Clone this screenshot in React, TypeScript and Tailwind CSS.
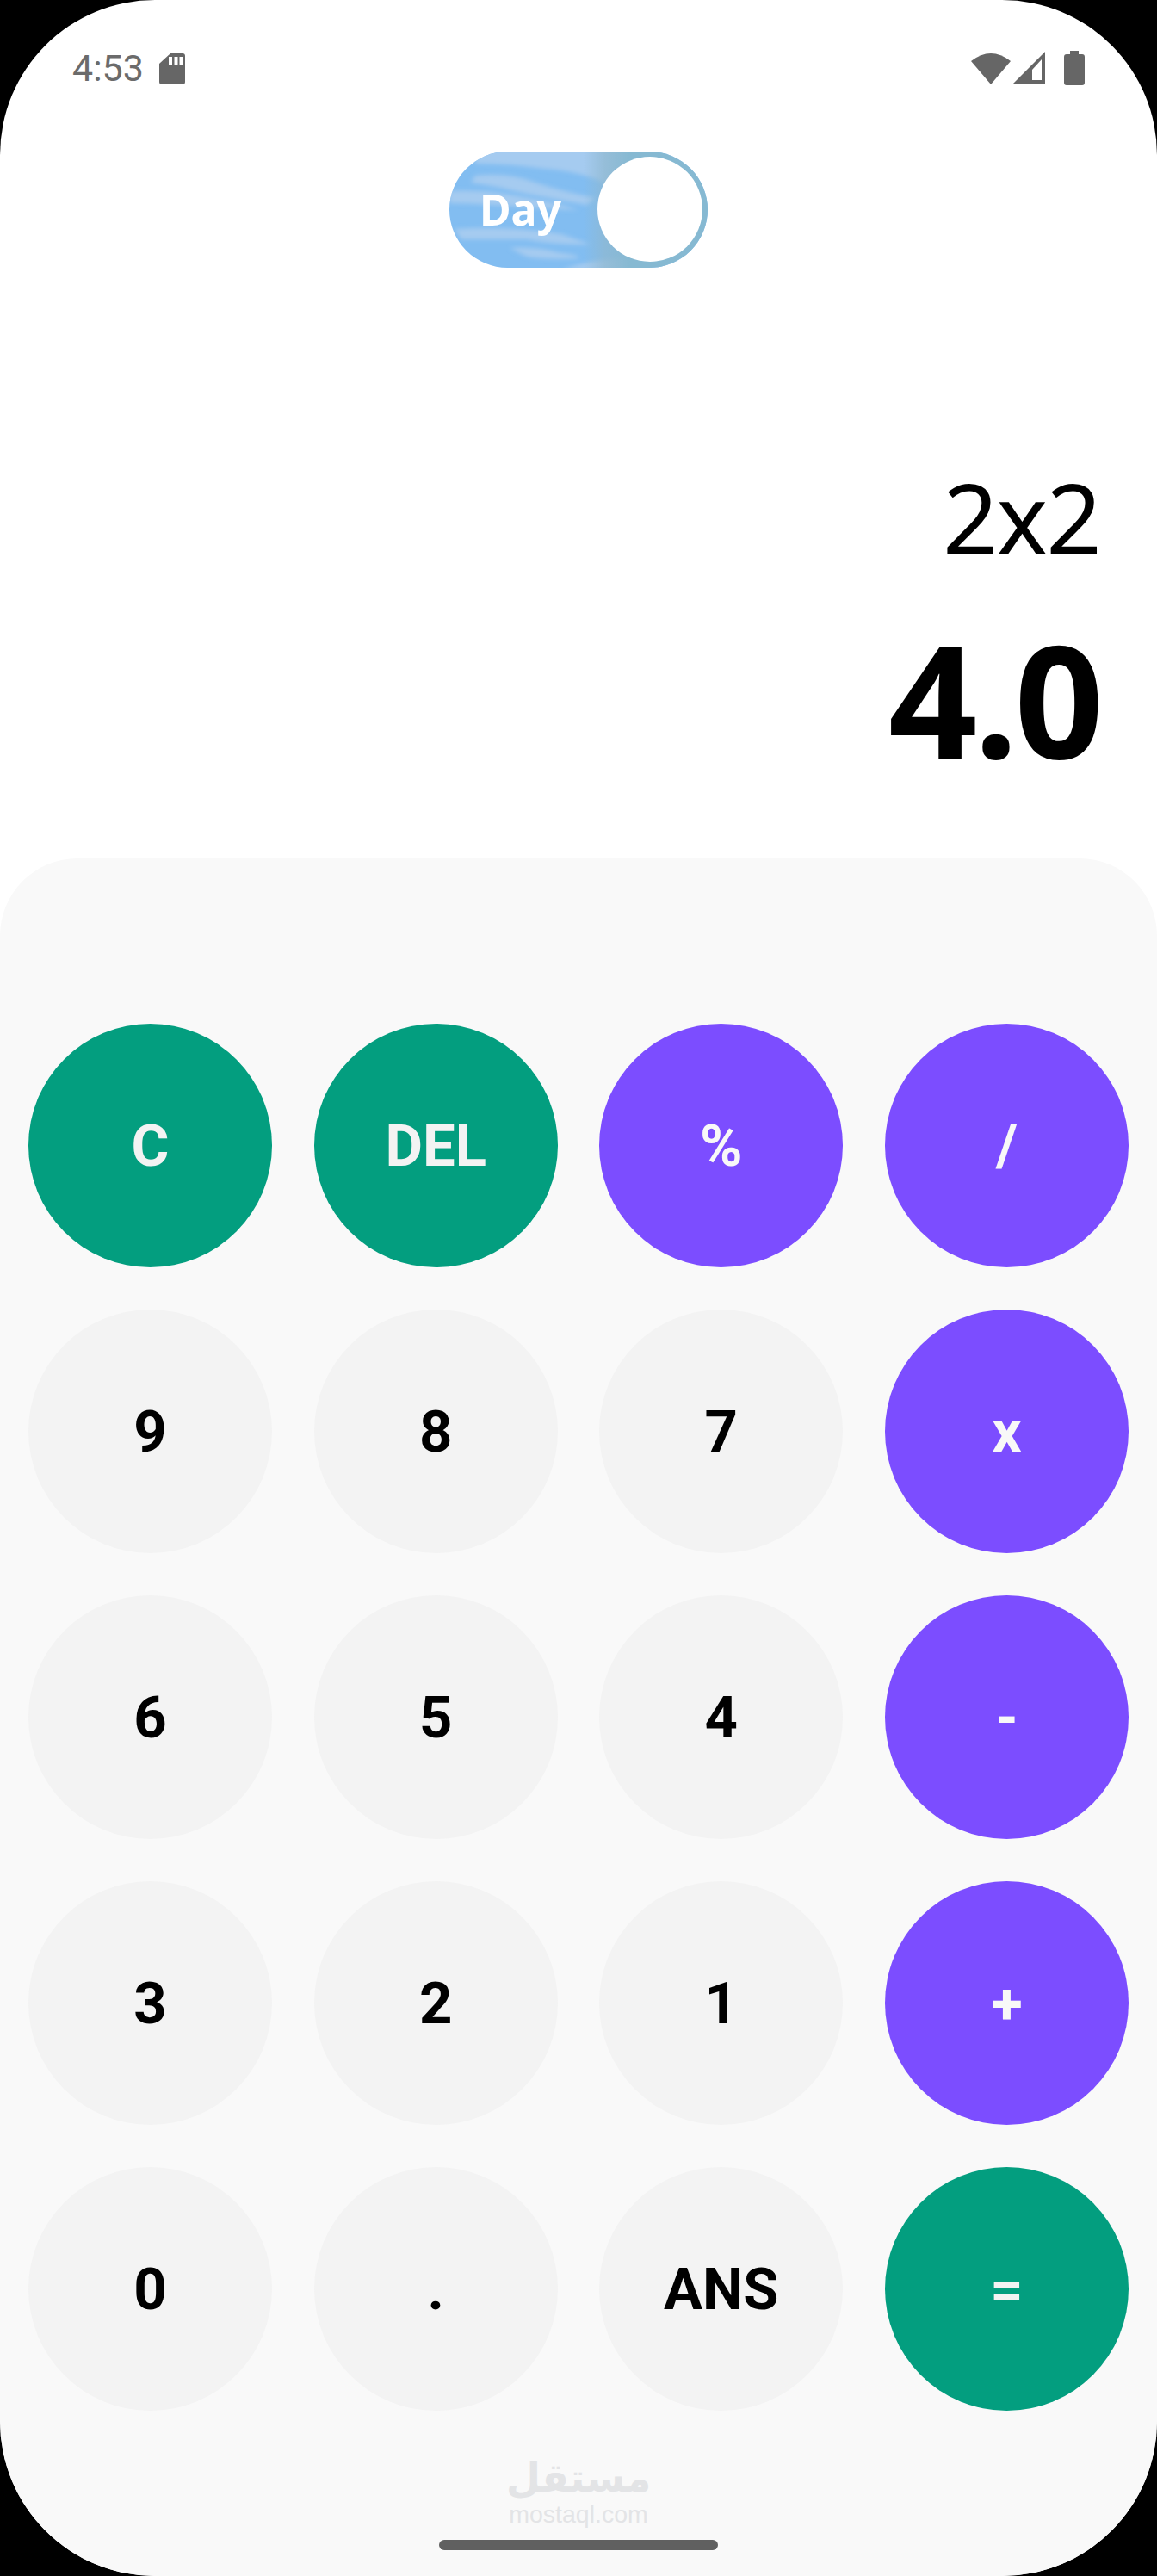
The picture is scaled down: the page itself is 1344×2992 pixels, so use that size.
import React from "react";

const roboto = "font-['Roboto',sans-serif]";

type K = { t: string; c: "g" | "p" | "n" };
const keys: K[] = [
  { t: "C", c: "g" }, { t: "DEL", c: "g" }, { t: "%", c: "p" }, { t: "/", c: "p" },
  { t: "9", c: "n" }, { t: "8", c: "n" }, { t: "7", c: "n" }, { t: "x", c: "p" },
  { t: "6", c: "n" }, { t: "5", c: "n" }, { t: "4", c: "n" }, { t: "-", c: "p" },
  { t: "3", c: "n" }, { t: "2", c: "n" }, { t: "1", c: "n" }, { t: "+", c: "p" },
  { t: "0", c: "n" }, { t: ".", c: "n" }, { t: "ANS", c: "n" }, { t: "=", c: "g" },
];

function Key({ k }: { k: K }) {
  const colour =
    k.c === "g"
      ? "bg-[#039e7f] text-[#f3f3f3]"
      : k.c === "p"
        ? "bg-[#7c4dff] text-[#f8f8f8]"
        : "bg-[#f3f3f3] text-black";
  return (
    <div className={`w-[283px] h-[283px] rounded-full flex items-center justify-center font-bold text-[67px] leading-[80px] ${roboto} ${colour}`}>
      {k.t}
    </div>
  );
}

function Toggle() {
  return (
    <div className="relative w-[300px] h-[135px] rounded-full overflow-hidden bg-[#82bdf1]">
      <svg className="absolute inset-0" width="300" height="135" viewBox="0 0 300 135">
        <defs>
          <linearGradient id="rim" x1="0" x2="1" y1="0" y2="0">
            <stop offset="0.52" stopColor="#8fb8cf" stopOpacity="0" />
            <stop offset="0.6" stopColor="#8fb8cf" stopOpacity="0.7" />
            <stop offset="0.7" stopColor="#86b9d2" />
            <stop offset="1" stopColor="#86b9d2" />
          </linearGradient>
          <filter id="soft" x="-10%" y="-10%" width="120%" height="120%">
            <feGaussianBlur stdDeviation="2.5" />
          </filter>
        </defs>
        <g filter="url(#soft)" fill="#a5cbf0">
          <path d="M30 -4H240V36L190 40Q150 22 110 20Q70 14 30 14Z" />
          <path d="M30 28Q70 24 100 36Q130 46 170 54L160 62Q90 50 60 42Q40 38 25 36Z" />
          <path d="M0 46Q40 44 80 52Q120 58 150 68Q100 66 50 62Q20 60 0 60Z" />
          <path d="M6 90Q70 86 130 96L165 108Q120 108 90 102Q50 102 14 102Z" />
          <path d="M70 112Q100 110 130 118Q150 120 150 124Q110 126 90 122Z" />
          <path d="M130 138Q170 122 230 124L250 138Z" />
        </g>
        <rect width="300" height="135" fill="url(#rim)" />
      </svg>
      <span className="absolute left-[35px] top-[33px] text-[50px] leading-[68px] font-bold text-white font-['Noto_Sans',sans-serif]">
        Day
      </span>
      <div className="absolute left-[172px] top-[6px] w-[122px] h-[122px] rounded-full bg-white" />
    </div>
  );
}

export default function App() {
  return (
    <div className="w-[1344px] h-[2992px] bg-black overflow-hidden">
      <div className="w-full h-full rounded-[180px] overflow-hidden bg-white flex flex-col">
        <div className="h-[176px] shrink-0 flex items-start justify-between pl-[84px] pr-[84px] pt-[53px]">
          <div className="flex items-start gap-[18px] h-[52px]">
            <span className={`text-[43px] leading-[52px] text-[#6b6b6b] ${roboto}`}>4:53</span>
            <svg className="mt-[8px]" width="30" height="38" viewBox="0 0 30 38">
              <path
                d="M13 1H27a3 3 0 0 1 3 3V34a3 3 0 0 1-3 3H3a3 3 0 0 1-3-3V13Z"
                fill="#666"
              />
              <rect x="11" y="5" width="4" height="9" fill="#fff" />
              <rect x="17.5" y="5" width="4" height="9" fill="#fff" />
              <rect x="23.5" y="5" width="4" height="9" fill="#fff" />
            </svg>
          </div>
          <div className="flex items-center h-[46px] mt-[3px]">
            <svg width="46" height="38" viewBox="0 0 46 38">
              <path d="M0 11 Q23 -7 46 11 L23 38Z" fill="#666" />
            </svg>
            <svg className="ml-[3px]" width="38" height="38" viewBox="0 0 38 38">
              <path d="M37 0V37H0Z" fill="#666" />
              <path d="M22 21 L33 9V33H22Z" fill="#fff" />
            </svg>
            <svg className="ml-[21px]" width="24" height="40" viewBox="0 0 24 40">
              <path
                d="M7 0H17V4H21a3 3 0 0 1 3 3V37a3 3 0 0 1-3 3H3a3 3 0 0 1-3-3V7a3 3 0 0 1 3-3H7Z"
                fill="#666"
              />
            </svg>
          </div>
        </div>

        <div className="flex justify-center shrink-0">
          <Toggle />
        </div>

        <div className="h-[686px] shrink-0 flex flex-col items-end pr-[66px] pt-[212px] font-['Noto_Sans',sans-serif] text-black">
          <div className="text-[113px] leading-[154px] tracking-[-2px]">2x2</div>
          <div className="text-[181px] leading-[246px] font-bold mt-[11px] tracking-[-4px]">4.0</div>
        </div>

        <div className="flex-1 bg-[#f9f9f9] rounded-t-[90px] pt-[192px] px-[33px] flex flex-col items-center">
          <div className="grid grid-cols-[repeat(4,283px)] auto-rows-[283px] gap-x-[48.67px] gap-y-[49px]">
            {keys.map((k) => (
              <Key key={k.t} k={k} />
            ))}
          </div>
          <div className="mt-[52px] h-[52px] flex items-center justify-center text-[#e3e4e6] font-bold font-['DejaVu_Sans',sans-serif] text-[46px] leading-[52px]">
            مستقل
          </div>
          <div className="mt-[3px] h-[26px] text-[28.5px] leading-[26px] font-['Liberation_Sans',sans-serif] text-[#e3e4e6]">
            mostaql.com
          </div>
          <div className="mt-[17px] w-[324px] h-[12px] rounded-full bg-[#606060]" />
        </div>
      </div>
    </div>
  );
}
